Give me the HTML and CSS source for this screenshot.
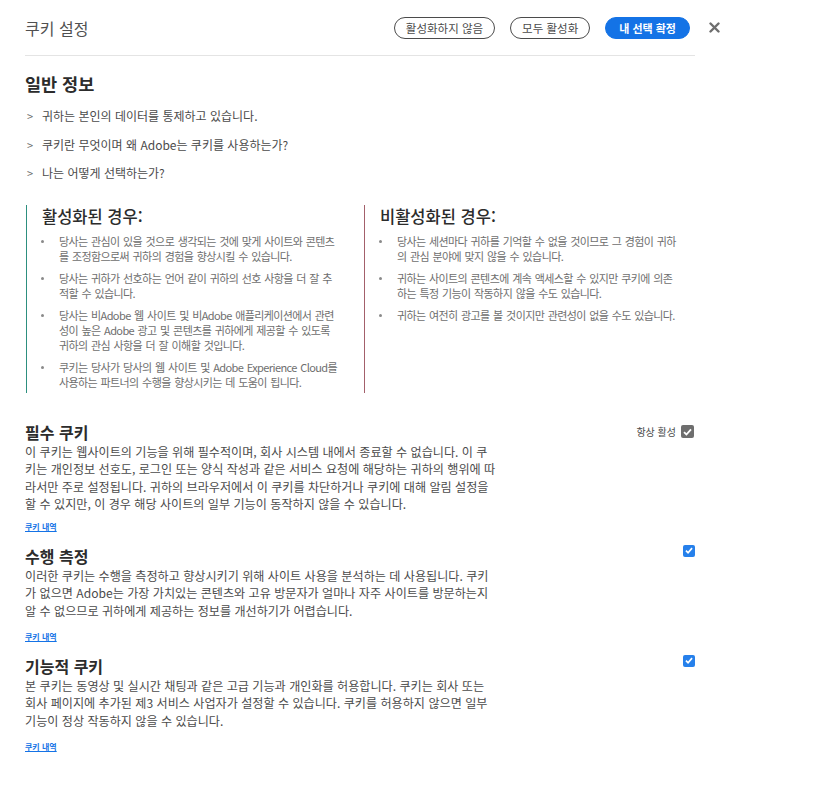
FILE: index.html
```html
<!DOCTYPE html>
<html lang="ko">
<head>
<meta charset="utf-8">
<title>쿠키 설정</title>
<link rel="stylesheet" href="styles.css">
</head>
<body>
<div class="page">
  <header class="header">
    <h1 class="title">쿠키 설정</h1>
    <div class="actions">
      <button class="btn btn-outline">활성화하지 않음</button>
      <button class="btn btn-outline">모두 활성화</button>
      <button class="btn btn-primary">내 선택 확정</button>
    </div>
    <button class="close" aria-label="닫기">
      <svg width="11" height="11" viewBox="0 0 11 11"><path d="M1.5 1.5 L9.5 9.5 M9.5 1.5 L1.5 9.5" stroke="#6e6e6e" stroke-width="2.4" stroke-linecap="round"/></svg>
    </button>
  </header>
  <div class="divider"></div>

  <section class="general">
    <h2 class="general-title">일반 정보</h2>
    <ul class="faq">
      <li class="faq-item"><span class="chev">&gt;</span>귀하는 본인의 데이터를 통제하고 있습니다.</li>
      <li class="faq-item"><span class="chev">&gt;</span>쿠키란 무엇이며 왜 Adobe는 쿠키를 사용하는가?</li>
      <li class="faq-item"><span class="chev">&gt;</span>나는 어떻게 선택하는가?</li>
    </ul>
  </section>

  <section class="compare">
    <div class="col col-on">
      <h3 class="col-title">활성화된 경우:</h3>
      <ul class="bullets">
        <li>당사는 관심이 있을 것으로 생각되는 것에 맞게 사이트와 콘텐츠를 조정함으로써 귀하의 경험을 향상시킬 수 있습니다.</li>
        <li>당사는 귀하가 선호하는 언어 같이 귀하의 선호 사항을 더 잘 추적할 수 있습니다.</li>
        <li>당사는 비Adobe 웹 사이트 및 비Adobe 애플리케이션에서 관련성이 높은 Adobe 광고 및 콘텐츠를 귀하에게 제공할 수 있도록 귀하의 관심 사항을 더 잘 이해할 것입니다.</li>
        <li>쿠키는 당사가 당사의 웹 사이트 및 Adobe Experience Cloud를 사용하는 파트너의 수행을 향상시키는 데 도움이 됩니다.</li>
      </ul>
    </div>
    <div class="col col-off">
      <h3 class="col-title">비활성화된 경우:</h3>
      <ul class="bullets">
        <li>당사는 세션마다 귀하를 기억할 수 없을 것이므로 그 경험이 귀하의 관심 분야에 맞지 않을 수 있습니다.</li>
        <li>귀하는 사이트의 콘텐츠에 계속 액세스할 수 있지만 쿠키에 의존하는 특정 기능이 작동하지 않을 수도 있습니다.</li>
        <li>귀하는 여전히 광고를 볼 것이지만 관련성이 없을 수도 있습니다.</li>
      </ul>
    </div>
  </section>

  <section class="cookie cookie-required">
    <div class="cookie-body">
      <h3 class="cookie-title">필수 쿠키</h3>
      <p class="cookie-desc">이 쿠키는 웹사이트의 기능을 위해 필수적이며, 회사 시스템 내에서 종료할 수 없습니다. 이 쿠키는 개인정보 선호도, 로그인 또는 양식 작성과 같은 서비스 요청에 해당하는 귀하의 행위에 따라서만 주로 설정됩니다. 귀하의 브라우저에서 이 쿠키를 차단하거나 쿠키에 대해 알림 설정을 할 수 있지만, 이 경우 해당 사이트의 일부 기능이 동작하지 않을 수 있습니다.</p>
      <a class="cookie-link" href="#">쿠키 내역</a>
    </div>
    <div class="cookie-toggle always">
      <span class="always-label">항상 활성</span>
      <span class="check check-gray"><svg width="9" height="8" viewBox="0 0 9 8"><path d="M1 4.2 L3.4 6.5 L8 1.3" fill="none" stroke="#fff" stroke-width="1.8"/></svg></span>
    </div>
  </section>

  <section class="cookie">
    <div class="cookie-body">
      <h3 class="cookie-title">수행 측정</h3>
      <p class="cookie-desc">이러한 쿠키는 수행을 측정하고 향상시키기 위해 사이트 사용을 분석하는 데 사용됩니다. 쿠키가 없으면 Adobe는 가장 가치있는 콘텐츠와 고유 방문자가 얼마나 자주 사이트를 방문하는지 알 수 없으므로 귀하에게 제공하는 정보를 개선하기가 어렵습니다.</p>
      <a class="cookie-link" href="#">쿠키 내역</a>
    </div>
    <div class="cookie-toggle">
      <span class="check check-blue"><svg width="8" height="7" viewBox="0 0 9 8"><path d="M1 4.2 L3.4 6.5 L8 1.3" fill="none" stroke="#fff" stroke-width="1.9"/></svg></span>
    </div>
  </section>

  <section class="cookie">
    <div class="cookie-body">
      <h3 class="cookie-title">기능적 쿠키</h3>
      <p class="cookie-desc">본 쿠키는 동영상 및 실시간 채팅과 같은 고급 기능과 개인화를 허용합니다. 쿠키는 회사 또는 회사 페이지에 추가된 제3 서비스 사업자가 설정할 수 있습니다. 쿠키를 허용하지 않으면 일부 기능이 정상 작동하지 않을 수 있습니다.</p>
      <a class="cookie-link" href="#">쿠키 내역</a>
    </div>
    <div class="cookie-toggle">
      <span class="check check-blue"><svg width="8" height="7" viewBox="0 0 9 8"><path d="M1 4.2 L3.4 6.5 L8 1.3" fill="none" stroke="#fff" stroke-width="1.9"/></svg></span>
    </div>
  </section>
</div>
</body>
</html>
```

FILE: styles.css
```css
* { box-sizing: border-box; }

body {
  margin: 0;
  background: #ffffff;
  font-family: "Noto Sans CJK KR", "Noto Sans", sans-serif;
  color: #4b4b4b;
}

.page {
  padding: 0 0 40px 25px;
  width: 730px;
}

.header {
  display: flex;
  align-items: center;
  height: 55px;
  width: 695px;
}

.title {
  flex: 1;
  margin: 0;
  font-size: 16px;
  font-weight: 400;
  color: #505050;
  line-height: 22px;
}

.actions {
  display: flex;
  gap: 15px;
  align-items: center;
}

.btn {
  font-family: inherit;
  font-size: 11.5px;
  line-height: 20px;
  height: 22px;
  padding: 0 11px;
  border-radius: 11px;
  cursor: pointer;
}

.btn-outline {
  background: #fff;
  border: 1px solid #4b4b4b;
  color: #4b4b4b;
}

.btn-primary {
  background: #1473e6;
  border: 1px solid #1473e6;
  color: #fff;
  font-weight: 700;
  font-size: 11px;
  padding: 0 13px;
}

.close {
  background: none;
  border: 0;
  padding: 0;
  margin-left: 18px;
  width: 12px;
  height: 12px;
  display: flex;
  align-items: center;
  justify-content: center;
}

.divider {
  width: 670px;
  height: 1px;
  background: #e4e4e4;
}

.general-title {
  margin: 17px 0 0;
  font-size: 17.5px;
  line-height: 22px;
  font-weight: 700;
  color: #2c2c2c;
}

.faq {
  list-style: none;
  margin: 11px 0 0;
  padding: 0;
}

.faq-item {
  font-size: 12px;
  line-height: 20px;
  margin-bottom: 8.5px;
  color: #4b4b4b;
}

.chev {
  display: inline-block;
  width: 17px;
  padding-left: 2px;
  color: #6e6e6e;
  font-size: 11px;
}

.compare {
  display: grid;
  grid-template-columns: 338px 338px;
  margin: 22px 0 0 1px;
}

.col {
  padding: 0 0 2px 15px;
}

.col-on { border-left: 1px solid #2d8f7f; }
.col-off { border-left: 1px solid #a3606b; }

.col-title {
  margin: 0 0 7px;
  font-size: 16.5px;
  line-height: 22px;
  font-weight: 500;
  color: #2c2c2c;
}

.bullets {
  list-style: none;
  margin: 0;
  padding: 0;
}

.bullets li {
  position: relative;
  padding: 0 25px 0 17px;
  font-size: 11px;
  line-height: 15.4px;
  color: #6e6e6e;
  margin-bottom: 6px;
  letter-spacing: -0.6px;
  word-spacing: 1px;
}

.col-off .bullets li { padding-right: 22px; }

.bullets li:last-child { margin-bottom: 0; }

.bullets li::before {
  content: "";
  position: absolute;
  left: -1px;
  top: 6px;
  width: 3px;
  height: 3px;
  border-radius: 50%;
  background: #8a8a8a;
}

.cookie {
  display: flex;
  width: 670px;
  margin-top: 12px;
}

.cookie-required { margin-top: 28px; }

.cookie-body {
  width: 471.5px;
}

.cookie-title {
  margin: 0;
  font-size: 16px;
  line-height: 22px;
  font-weight: 700;
  color: #2c2c2c;
}

.cookie-desc {
  margin: 0;
  font-size: 12.1px;
  line-height: 17.5px;
  color: #4b4b4b;
}

.cookie-link {
  display: block;
  width: max-content;
  margin-top: 11.5px;
  font-size: 8px;
  line-height: 12px;
  font-weight: 700;
  color: #1473e6;
  text-decoration: underline;
}

.cookie-required .cookie-link { margin-top: 8px; }

.cookie-toggle {
  margin-left: auto;
  display: flex;
  align-items: center;
  gap: 5px;
  height: 12px;
}

.always {
  height: 22px;
}

.always-label {
  font-size: 10px;
  color: #4b4b4b;
}

.check {
  display: inline-flex;
  align-items: center;
  justify-content: center;
  border-radius: 2px;
}

.check-gray {
  width: 13px;
  height: 13px;
  background: #6e6e6e;
  margin-right: 1px;
}

.check-blue {
  width: 12px;
  height: 12px;
  background: #2680eb;
}
```
